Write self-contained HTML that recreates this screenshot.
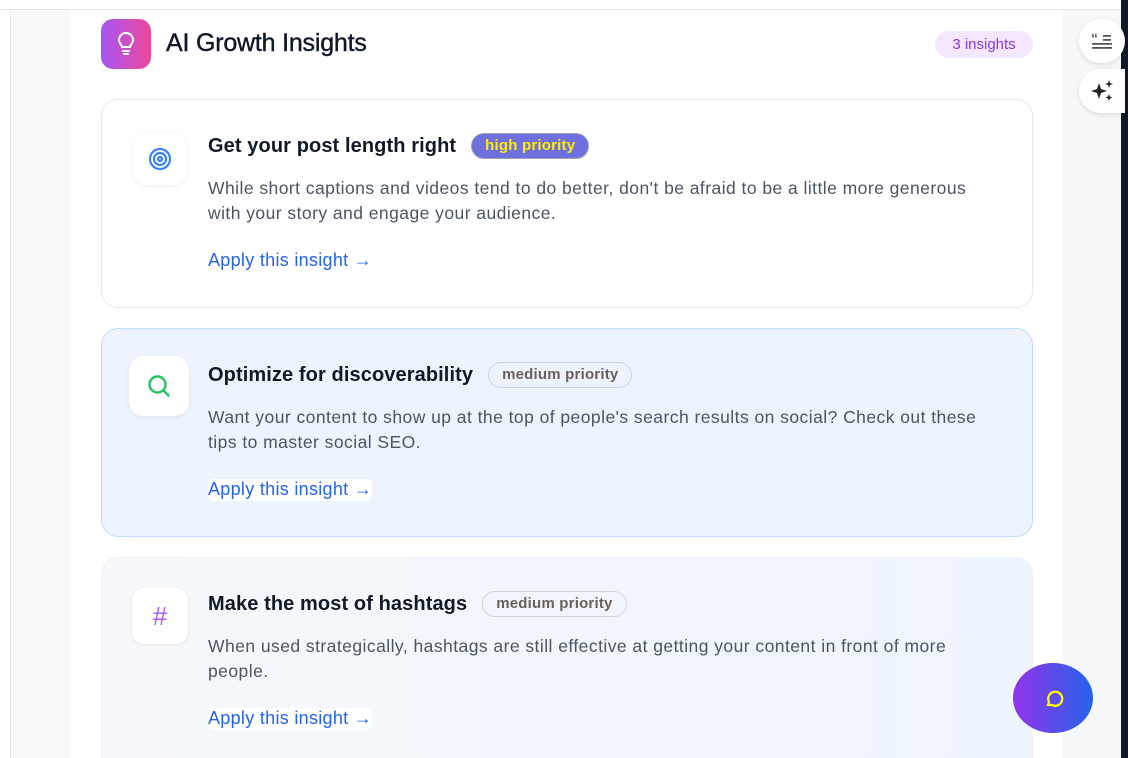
<!DOCTYPE html>
<html><head><meta charset="utf-8"><style>
*{box-sizing:border-box;margin:0;padding:0}
html,body{width:1128px;height:758px;overflow:hidden}
body{background:#fff;font-family:"Liberation Sans",sans-serif;position:relative}
.top{position:absolute;left:0;top:0;width:1121px;height:10px;background:#fff;border-bottom:1px solid #e5e7eb}
.lbg{position:absolute;left:10px;top:10px;width:61px;height:748px;background:#f8f9fb;border-left:1px solid #e5e7eb}
.rbg{position:absolute;left:1063px;top:10px;width:58px;height:748px;background:#f6f7f9}
.dark{position:absolute;left:1121px;top:0;width:7px;height:758px;background:#111827}
.panel{position:absolute;left:71px;top:10px;width:992px;height:748px;background:#fff}
.logo{position:absolute;left:101px;top:19px;width:50px;height:50px;border-radius:12px;background:linear-gradient(90deg,#a855f7,#ec4899);display:flex;align-items:center;justify-content:center}
h1{position:absolute;left:166px;top:29px;font-size:25px;font-weight:normal;color:#111827;letter-spacing:-0.2px;-webkit-text-stroke:0.4px #111827}
.cnt{position:absolute;left:935px;top:31px;width:98px;height:27px;border-radius:14px;background:#f3e8ff;color:#9333ea;font-size:15px;line-height:27px;text-align:center}
.card{position:absolute;left:101px;width:932px;height:209px;border-radius:17px;border:1px solid #e5e7eb;background:#fff}
.ic{position:absolute;left:30px;top:33px;width:56px;height:56px;border-radius:12px;background:#fff;box-shadow:0 1px 4px rgba(0,0,0,.08);display:flex;align-items:center;justify-content:center}
.t{position:absolute;left:106px;top:33px;font-size:20px;font-weight:bold;color:#111827;display:flex;align-items:center;letter-spacing:0.1px}
.b{margin-left:15px;font-size:15px;height:26px;line-height:24px;padding:0 13px;border-radius:13px;font-weight:bold;letter-spacing:0.2px}
.p{position:absolute;left:106px;top:76px;width:775px;font-size:17.5px;line-height:25px;color:#4b5563;letter-spacing:0.45px}
.a{position:absolute;left:106px;top:150px;font-size:18px;color:#2563eb;background:#fff;border-radius:5px;padding:0 0 1px 0;letter-spacing:0.3px}
.chat{position:absolute;left:1013px;top:663px;width:80px;height:70px;border-radius:40px/35px;background:linear-gradient(90deg,#9333ea,#2563eb);display:flex;align-items:center;justify-content:center}
.rb{position:absolute;left:1079px;width:46px;height:44px;background:#fff;border-radius:22px 0 0 22px;box-shadow:0 2px 6px rgba(0,0,0,.1);display:flex;align-items:center;justify-content:center}
</style></head><body>
<div class="top"></div><div class="lbg"></div><div class="rbg"></div><div class="dark"></div>
<div class="panel"></div>
<div class="logo"><svg width="22" height="24" viewBox="0 0 22 24" fill="none" stroke="#fff" stroke-width="2" stroke-linecap="round"><path d="M7 15c0-2-3-3.5-3-7a7 7 0 0 1 14 0c0 3.5-3 5-3 7z"/><path d="M8 19h6M9 22h4"/></svg></div>
<h1>AI Growth Insights</h1>
<div class="cnt">3 insights</div>

<div class="card" style="top:99px">
<div class="ic" style="left:31px;top:33px;width:54px;height:52px"><svg width="26" height="26" viewBox="0 0 26 26" fill="none" stroke="#3b82f6" stroke-width="2.2"><circle cx="13" cy="13" r="10"/><circle cx="13" cy="13" r="6"/><circle cx="13" cy="13" r="2"/></svg></div>
<div class="t">Get your post length right<span class="b" style="background:#6f6fe0;color:#fff000;border:1px solid #9ca3af">high priority</span></div>
<div class="p">While short captions and videos tend to do better, don't be afraid to be a little more generous with your story and engage your audience.</div>
<div class="a">Apply this insight →</div>
</div>

<div class="card" style="top:328px;background:#eef4fe;border-color:#bfdbfe">
<div class="ic" style="left:27px;top:27px;width:60px;height:60px;border-radius:14px"><svg width="26" height="26" viewBox="0 0 26 26" fill="none" stroke="#22c55e" stroke-width="2.4" stroke-linecap="round"><circle cx="11.5" cy="11.5" r="8"/><path d="M17.5 17.5l5 5"/></svg></div>
<div class="t">Optimize for discoverability<span class="b" style="color:#6b5f58;border:1px solid #d1d5db">medium priority</span></div>
<div class="p">Want your content to show up at the top of people's search results on social? Check out these tips to master social SEO.</div>
<div class="a">Apply this insight →</div>
</div>

<div class="card" style="top:557px;background:linear-gradient(90deg,#f6f8fb,#eef4fd);border-color:#f0f2f5;height:201px;border-bottom:none;border-radius:17px 17px 0 0">
<div class="ic" style="left:30px;top:30px;width:56px;height:56px"><span style="color:#a855f7;font-size:26px;line-height:1">#</span></div>
<div class="t" style="top:33px">Make the most of hashtags<span class="b" style="color:#6b5f58;border:1px solid #d1d5db">medium priority</span></div>
<div class="p">When used strategically, hashtags are still effective at getting your content in front of more people.</div>
<div class="a">Apply this insight →</div>
</div>

<div class="rb" style="top:19px;border-radius:22px;width:46px"><svg width="22" height="20" viewBox="0 0 22 20" fill="#555"><text x="0" y="12" font-size="14" font-family="Liberation Sans" font-weight="bold">“</text><rect x="12" y="4" width="8" height="1.8"/><rect x="12" y="8" width="8" height="1.8"/><rect x="1" y="12" width="20" height="1.8"/><rect x="1" y="16" width="20" height="1.8"/></svg></div>
<div class="rb" style="top:69px"><svg width="26" height="26" viewBox="0 0 26 26" fill="#222"><path d="M10 5l2 6 6 2-6 2-2 6-2-6-6-2 6-2z"/><path d="M20 2l1 3 3 1-3 1-1 3-1-3-3-1 3-1z"/><path d="M20 16l1 2.5 2.5 1-2.5 1-1 2.5-1-2.5-2.5-1 2.5-1z"/></svg></div>
<div class="chat"><svg width="22" height="22" viewBox="0 0 22 22" fill="none" stroke="#ffff00" stroke-width="2.2"><path d="M6 18l1-3a7 7 0 1 1 3 3z"/></svg></div>
</body></html>
